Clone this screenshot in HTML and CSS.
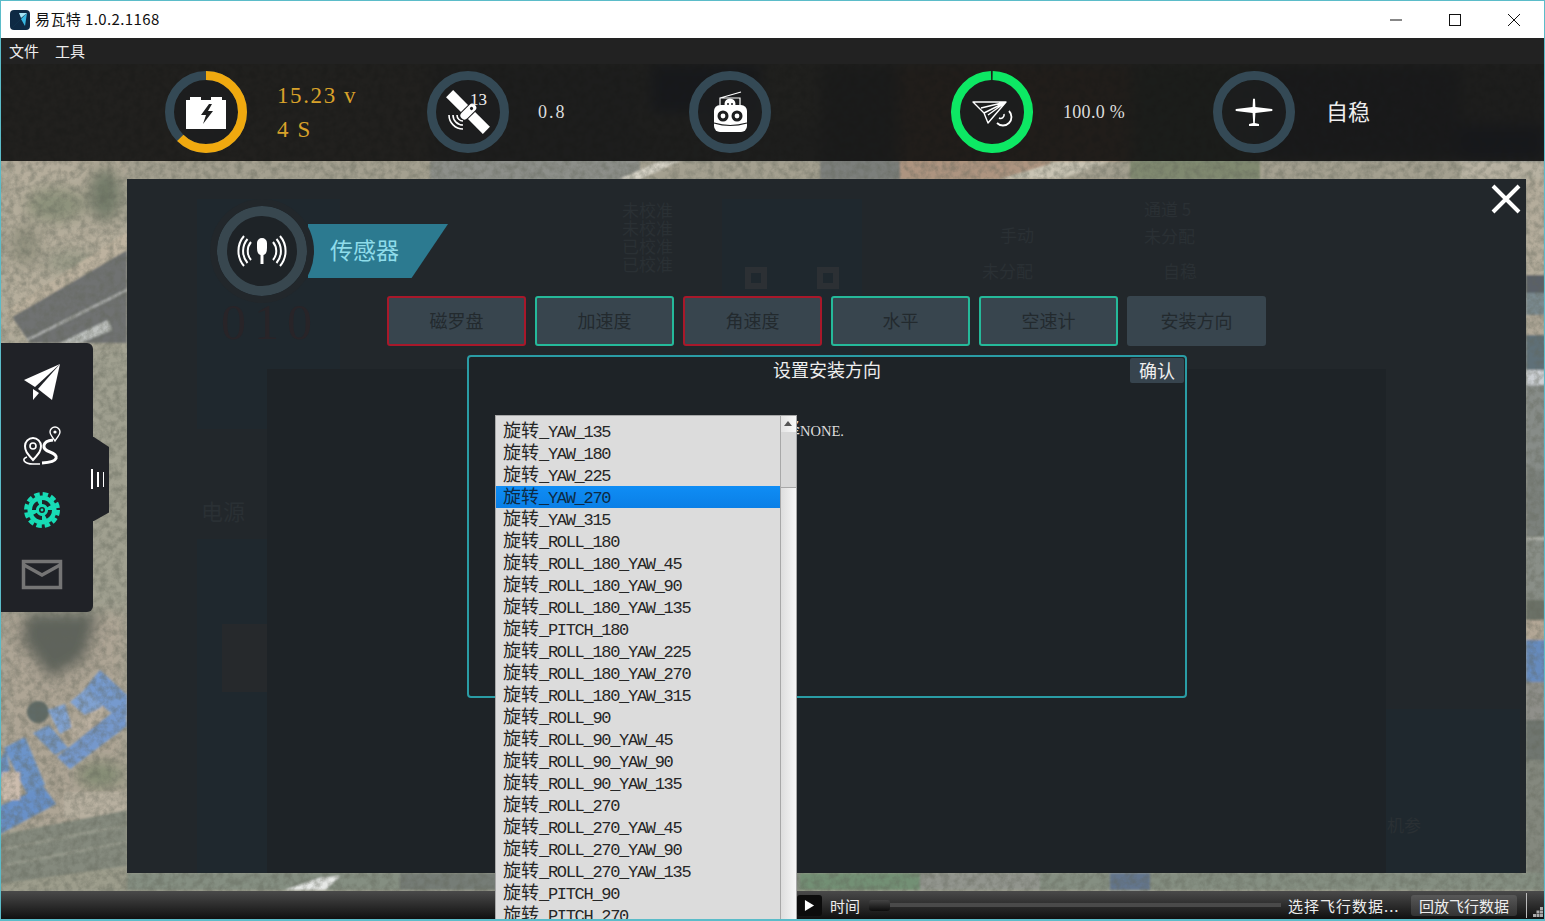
FILE: index.html
```html
<!DOCTYPE html>
<html lang="zh-CN">
<head>
    <meta charset="UTF-8">
    <meta name="viewport" content="width=device-width, initial-scale=1.0">
    <title>易瓦特 1.0.2.1168</title>
    <link rel="stylesheet" href="styles.css">
</head>
<body>
<div class="window">
    <header class="titlebar">
        <svg class="app-logo" viewBox="0 0 20 20">
            <rect width="20" height="20" rx="4" fill="#0e2a44"/>
            <path d="M3 17 L17 3 L15 16 L11 9 Z" fill="#38b8e2"/>
            <path d="M9 3 H17 L11 8 Z" fill="#a5e4f4"/>
        </svg>
        <span class="app-name">易瓦特 1.0.2.1168</span>
        <div class="win-controls">
            <svg viewBox="0 0 14 14"><path d="M1 7 H13" stroke="#111" fill="none"/></svg>
            <svg viewBox="0 0 14 14"><rect x="1.5" y="1.5" width="11" height="11" stroke="#111" fill="none"/></svg>
            <svg viewBox="0 0 14 14"><path d="M1 1 L13 13 M13 1 L1 13" stroke="#111" fill="none"/></svg>
        </div>
    </header>
    <nav class="menubar">
        <span>文件</span>
        <span>工具</span>
    </nav>

    <main class="stage">
        <!-- satellite map behind everything -->
        <svg class="map" viewBox="0 64 1545 857" width="1545" height="857">
            <defs>
                <filter id="soft"><feGaussianBlur stdDeviation="1.3"/></filter>
                <filter id="wide"><feGaussianBlur stdDeviation="7"/></filter>
                <filter id="blotch" x="0" y="0" width="100%" height="100%">
                    <feTurbulence type="fractalNoise" baseFrequency="0.14" numOctaves="4" seed="4"/>
                    <feColorMatrix values="0 0 0 0 0.12  0 0 0 0 0.13  0 0 0 0 0.1  2.4 0 0 0 -0.85"/>
                </filter>
            </defs>
            <rect x="0" y="64" width="1545" height="857" fill="#a0a090"/>
            <!-- big soft patches -->
            <g filter="url(#wide)">
                <rect x="0" y="64" width="430" height="115" fill="#a9a292"/>
                <rect x="430" y="64" width="210" height="115" fill="#8b8d88"/>
                <rect x="650" y="64" width="110" height="50" fill="#5a6680"/>
                <rect x="640" y="124" width="180" height="55" fill="#8f9088"/>
                <rect x="820" y="64" width="80" height="115" fill="#777a78"/>
                <rect x="900" y="64" width="230" height="115" fill="#a98d74"/>
                <rect x="1130" y="64" width="130" height="115" fill="#7f8a78"/>
                <rect x="1260" y="64" width="200" height="97" fill="#6b7078"/>
                <rect x="1460" y="64" width="85" height="60" fill="#8c8c86"/>
                <rect x="1460" y="124" width="85" height="37" fill="#57627e"/>
                <rect x="0" y="161" width="127" height="182" fill="#b6ae9c"/>
                <ellipse cx="55" cy="205" rx="30" ry="18" fill="#8d927c"/>
                <ellipse cx="105" cy="195" rx="18" ry="28" fill="#747d6a"/>
                <ellipse cx="25" cy="245" rx="16" ry="22" fill="#939280"/>
                <ellipse cx="70" cy="262" rx="26" ry="12" fill="#979986"/>
                <rect x="0" y="612" width="127" height="220" fill="#aea595"/>
                <path d="M25 613 L100 613 L85 660 L50 680 L20 640 Z" fill="#5e645c"/>
                <ellipse cx="100" cy="775" rx="24" ry="14" fill="#848c74"/>
            </g>
            <g filter="url(#soft)">
                <!-- top strip -->
                <rect x="127" y="161" width="1418" height="18" fill="#a4a090"/>
                <rect x="430" y="161" width="210" height="18" fill="#8d8f8a"/>
                <rect x="820" y="161" width="80" height="18" fill="#7c7f7c"/>
                <rect x="900" y="161" width="150" height="18" fill="#ad9480"/>
                <rect x="1130" y="161" width="130" height="18" fill="#80896f"/>
                <rect x="1460" y="161" width="85" height="18" fill="#b8b2a2"/>
                <path d="M620 179 L660 161 L680 161 L640 179 Z" fill="#d8d4c8"/>
                <path d="M1000 179 L1060 161 L1110 161 L1060 179 Z" fill="#c9c4b4"/>
                <!-- left strip, above the side menu -->
                <path d="M4 312 L127 232 L127 250 L10 322 Z" fill="#bdb29f"/>
                <path d="M12 317 L127 250 L127 343 L30 343 Z" fill="#6f7272"/>
                <path d="M27 340 L127 290" stroke="#b2b5b1" stroke-width="2"/>
                <path d="M60 343 L108 320 L112 330 L80 343 Z" fill="#bfc2c0"/>
                <!-- left strip, below the side menu -->
                <ellipse cx="38" cy="712" rx="11" ry="11" fill="#5e6a66"/>
                <path d="M84 690 L100 670 L127 695 L127 716 L110 712 Z" fill="#769ace"/>
                <path d="M70 702 L87 688 L102 706 L88 718 Z" fill="#80a2d2"/>
                <path d="M48 710 L65 704 L72 727 L60 734 Z" fill="#80a2d2"/>
                <path d="M57 757 L124 703 L127 726 L70 769 Z" fill="#7498cc"/>
                <path d="M33 733 L49 725 L68 748 L55 755 Z" fill="#7498c8"/>
                <path d="M70 722 L104 706 L100 722 L74 738 Z" fill="#bbb0a0"/>
                <path d="M4 748 L25 737 L45 785 L27 794 Z" fill="#6c94ca"/>
                <path d="M0 806 L43 786 L56 804 L0 834 Z" fill="#6890c8"/>
                <path d="M0 760 L6 750 L10 770 L0 778 Z" fill="#6c94ca"/>
                <rect x="2" y="772" width="18" height="28" fill="#cdbdae"/>
                <rect x="64" y="792" width="63" height="26" fill="#b8b0a0"/>
                <path d="M0 835 L127 810 L127 880 L0 890 Z" fill="#858a7e"/>
                <path d="M0 850 L127 825 M0 866 L127 842" stroke="#95998c" stroke-width="3"/>
                <path d="M0 884 L127 866 V890 H0 Z" fill="#9d9d8c"/>
                <!-- bottom strip -->
                <rect x="127" y="873" width="1418" height="17" fill="#858f82"/>
                <rect x="400" y="873" width="200" height="17" fill="#767d77"/>
                <rect x="800" y="873" width="120" height="17" fill="#739074"/>
                <rect x="920" y="873" width="120" height="17" fill="#92958e"/>
                <rect x="1110" y="873" width="40" height="17" fill="#64768e"/>
                <path d="M285 890 L320 878 L340 876 L325 890 Z" fill="#e6e8e6"/>
                <!-- right strip -->
                <rect x="1526" y="179" width="19" height="96" fill="#b5ad9c"/>
                <rect x="1526" y="275" width="19" height="18" fill="#5a6068"/>
                <rect x="1526" y="293" width="19" height="22" fill="#7a8a90"/>
                <rect x="1526" y="315" width="19" height="20" fill="#b0a898"/>
                <rect x="1526" y="335" width="19" height="35" fill="#5f6f78"/>
                <rect x="1526" y="370" width="19" height="15" fill="#ccd0d4"/>
                <rect x="1526" y="385" width="19" height="85" fill="#878c88"/>
                <rect x="1526" y="470" width="19" height="70" fill="#7c817c"/>
                <rect x="1526" y="537" width="19" height="4" fill="#aeb0a8"/>
                <rect x="1526" y="540" width="19" height="60" fill="#8a8f88"/>
                <rect x="1526" y="600" width="19" height="20" fill="#6c7268"/>
                <rect x="1526" y="620" width="19" height="20" fill="#b3a796"/>
                <rect x="1526" y="640" width="19" height="42" fill="#668bbe"/>
                <rect x="1526" y="682" width="19" height="38" fill="#8f8f8a"/>
                <rect x="1526" y="720" width="19" height="40" fill="#6f7670"/>
                <rect x="1526" y="760" width="19" height="113" fill="#84887e"/>
            </g>
            <rect x="0" y="64" width="1545" height="857" filter="url(#blotch)" opacity="0.4"/>
        </svg>

        <section class="status">
            <div class="status-item">
                <svg class="ring" viewBox="0 0 82 82">
                    <circle class="ring-inner" cx="41" cy="41" r="32"/>
                    <circle class="ring-track" cx="41" cy="41" r="36.5"/>
                    <circle class="ring-value ring-orange" cx="41" cy="41" r="36.5" stroke-dasharray="143 230" transform="rotate(-90 41 41)"/>
                    <path d="M21 29 H25 V26 H36 V29 H46 V26 H57 V29 H61 V58 H21 Z" fill="#fff"/>
                    <path d="M44 33 L36 44 H41 L38 53 L48 40 H43 L47 33 Z" fill="#1d1e1f"/>
                </svg>
                <div class="volt">
                    <span>15.23 v</span>
                    <span>4 S</span>
                </div>
            </div>
            <div class="status-item">
                <div class="ring-box">
                    <svg class="ring" viewBox="0 0 82 82">
                        <circle class="ring-inner" cx="41" cy="41" r="32"/>
                        <circle class="ring-track" cx="41" cy="41" r="36.5"/>
                        <g transform="rotate(45 41 41)" fill="#fff">
                            <rect x="15" y="36" width="21" height="10"/>
                            <rect x="46" y="36" width="21" height="10"/>
                        </g>
                        <g transform="rotate(-45 41 41)">
                            <rect x="32" y="37" width="19" height="8" rx="4" fill="#fff"/>
                            <circle cx="46" cy="41" r="1.6" fill="#1d1e1f"/>
                        </g>
                        <path d="M36 50 A6 6 0 0 1 30 44 M36 54 A10 10 0 0 1 26 44 M36 58 A14 14 0 0 1 22 44" stroke="#fff" stroke-width="1.6" fill="none"/>
                    </svg>
                    <span class="sat-count">13</span>
                </div>
                <span class="reading reading-sat">0.8</span>
            </div>
            <div class="status-item">
                <svg class="ring" viewBox="0 0 82 82">
                    <circle class="ring-inner" cx="41" cy="41" r="32"/>
                    <circle class="ring-track" cx="41" cy="41" r="36.5"/>
                    <path d="M31 27 L52 21 M31 34 V27 H51 V34" stroke="#fff" stroke-width="1.2" fill="none"/>
                    <rect x="25" y="34" width="33" height="27" rx="6" fill="#fff"/>
                    <circle cx="41" cy="33" r="5.5" fill="#fff"/>
                    <circle cx="39" cy="33" r="1" fill="#1d1e1f"/>
                    <circle cx="43" cy="33" r="1" fill="#1d1e1f"/>
                    <circle cx="34" cy="45" r="5.5" fill="#1d1e1f"/>
                    <circle cx="34" cy="45" r="2.4" fill="#fff"/>
                    <circle cx="48" cy="45" r="5.5" fill="#1d1e1f"/>
                    <circle cx="48" cy="45" r="2.4" fill="#fff"/>
                    <path d="M25 52 Q41 57 58 52" stroke="#1d1e1f" stroke-width="1.2" fill="none"/>
                </svg>
            </div>
            <div class="status-item">
                <svg class="ring" viewBox="0 0 82 82">
                    <circle class="ring-inner" cx="41" cy="41" r="32"/>
                    <circle class="ring-value ring-green" cx="41" cy="41" r="36.5" stroke-dasharray="227.3 2" transform="rotate(-89 41 41)"/>
                    <path d="M22 31 L55 31 L37 52 L33 42 Z M55 31 L33 42 M55 31 L30 37 M55 31 L37 44" stroke="#fff" stroke-width="1.4" stroke-linejoin="round" fill="none"/>
                    <path d="M58 40 A8 8 0 0 1 46 52" stroke="#fff" stroke-width="1.8" fill="none"/>
                    <path d="M53 43 A3.5 3.5 0 0 1 48 47" stroke="#fff" stroke-width="1.6" fill="none"/>
                </svg>
                <span class="reading">100.0 %</span>
            </div>
            <div class="status-item">
                <svg class="ring" viewBox="0 0 82 82">
                    <circle class="ring-inner" cx="41" cy="41" r="32"/>
                    <circle class="ring-track" cx="41" cy="41" r="36.5"/>
                    <path d="M40 28 Q41 27 42 28 L42.4 36 L59 38 Q60 39 59 40 L42.4 42 L41.8 52 L46 53 V55 H36 V53 L40.2 52 L39.6 42 L23 40 Q22 39 23 38 L39.6 36 Z" fill="#fff"/>
                </svg>
                <span class="mode">自稳</span>
            </div>
        </section>

        <aside class="sidenav">
            <svg viewBox="20 362 44 44">
                <path d="M60 365 L24 381 L35 388 Z" fill="#fff"/>
                <path d="M60 365 L38 390 L52 401 Z" fill="#fff"/>
                <path d="M33 390 L39 394 L33 401 Z" fill="#fff"/>
            </svg>
            <svg viewBox="20 425 44 44">
                <path d="M33 460 C27 453 25 451 25 446 A8 8 0 0 1 41 446 C41 451 39 453 33 460 Z" stroke="#fff" stroke-width="2" fill="none"/>
                <circle cx="33" cy="446" r="3" stroke="#fff" stroke-width="1.6" fill="none"/>
                <path d="M27 457 C21 459 24 464 33 464 H40" stroke="#fff" stroke-width="1.6" fill="none"/>
                <path d="M53 440 C42 441 41 449 50 452 C59 455 60 462 42 463" stroke="#fff" stroke-width="3" fill="none"/>
                <path d="M55 441 C52 436 50 435 50 432 A5 5 0 0 1 60 432 C60 435 58 436 55 441 Z" stroke="#fff" stroke-width="1.4" fill="none"/>
                <circle cx="55" cy="432" r="1.6" fill="#fff"/>
            </svg>
            <svg viewBox="20 488 44 44">
                <circle cx="42" cy="510" r="16" stroke="#17dbb5" stroke-width="4" stroke-dasharray="5.4 3" fill="none"/>
                <circle cx="42" cy="510" r="14.5" fill="#17dbb5"/>
                <circle cx="42" cy="510" r="8" stroke="#1f2126" stroke-width="4" stroke-dasharray="8.5 4" fill="none"/>
                <circle cx="42" cy="510" r="3" fill="#1f2126"/>
                <circle cx="42" cy="510" r="1.4" fill="#17dbb5"/>
            </svg>
            <svg viewBox="20 551 44 44">
                <rect x="23.5" y="560.5" width="37" height="26" stroke="#757575" stroke-width="3.5" fill="none"/>
                <path d="M24 564 L42 574 L60 564" stroke="#757575" stroke-width="3.5" fill="none"/>
            </svg>
        </aside>
        <div class="sidenav-tab"><i></i><i></i><i></i></div>

        <section class="panel">
            <!-- page behind the panel, barely visible through it -->
            <div class="ghost ghost-a"></div>
            <div class="ghost ghost-b"></div>
            <div class="ghost ghost-c"></div>
            <div class="ghost ghost-d"></div>
            <div class="ghost-box gb-1"></div>
            <div class="ghost-box gb-2"></div>
            <div class="ghost-box gb-3"></div>
            <div class="ghost-text gt-1">未校准<br>未校准<br>已校准<br>已校准</div>
            <div class="ghost-text gt-2">手动</div>
            <div class="ghost-text gt-3">未分配</div>
            <div class="ghost-text gt-4">通道 5</div>
            <div class="ghost-text gt-5">未分配</div>
            <div class="ghost-text gt-6">自稳</div>
            <div class="ghost-text gt-7">电源</div>
            <div class="ghost-text gt-8">010</div>
            <div class="panel-inner"></div>
            <div class="ghost-text gt-9">机参</div>

            <div class="panel-head">
                <svg class="sensor-ring" viewBox="0 0 90 90">
                    <circle cx="45" cy="45" r="40" fill="#1e2327" stroke="#38474f" stroke-width="10"/>
                    <path d="M40 37 A5 5 0 0 1 50 37 V42 Q50 48 46.5 49 V58 H43.5 V49 Q40 48 40 42 Z" fill="#fff"/>
                    <g stroke="#fff" stroke-width="2" fill="none">
                        <path d="M34 36 A14 14 0 0 0 34 54 M30.500 33 A18.500 18.500 0 0 0 30.500 57 M27 30 A23 23 0 0 0 27 60"/>
                        <path d="M56 36 A14 14 0 0 1 56 54 M59.500 33 A18.500 18.500 0 0 1 59.500 57 M63 30 A23 23 0 0 1 63 60"/>
                    </g>
                </svg>
                <h2 class="panel-tag">传感器</h2>
            </div>

            <div class="tabs">
                <button class="tab tab-bad">磁罗盘</button>
                <button class="tab tab-ok">加速度</button>
                <button class="tab tab-bad">角速度</button>
                <button class="tab tab-ok">水平</button>
                <button class="tab tab-ok">空速计</button>
                <button class="tab">安装方向</button>
            </div>

            <div class="dialog">
                <h3 class="dialog-title">设置安装方向</h3>
                <button class="dialog-ok">确认</button>
                <p class="dialog-msg"><span class="zh">请选择</span>NONE.</p>
            </div>

            <button class="panel-close">
                <svg viewBox="0 0 30 30"><path d="M2 2 L28 28 M28 2 L2 28" stroke="#fff" stroke-width="4" fill="none"/></svg>
            </button>
        </section>

        <div class="dropdown">
            <ul class="dropdown-list">
                <li><span class="zh">旋转</span>_YAW_135</li>
                <li><span class="zh">旋转</span>_YAW_180</li>
                <li><span class="zh">旋转</span>_YAW_225</li>
                <li class="selected"><span class="zh">旋转</span>_YAW_270</li>
                <li><span class="zh">旋转</span>_YAW_315</li>
                <li><span class="zh">旋转</span>_ROLL_180</li>
                <li><span class="zh">旋转</span>_ROLL_180_YAW_45</li>
                <li><span class="zh">旋转</span>_ROLL_180_YAW_90</li>
                <li><span class="zh">旋转</span>_ROLL_180_YAW_135</li>
                <li><span class="zh">旋转</span>_PITCH_180</li>
                <li><span class="zh">旋转</span>_ROLL_180_YAW_225</li>
                <li><span class="zh">旋转</span>_ROLL_180_YAW_270</li>
                <li><span class="zh">旋转</span>_ROLL_180_YAW_315</li>
                <li><span class="zh">旋转</span>_ROLL_90</li>
                <li><span class="zh">旋转</span>_ROLL_90_YAW_45</li>
                <li><span class="zh">旋转</span>_ROLL_90_YAW_90</li>
                <li><span class="zh">旋转</span>_ROLL_90_YAW_135</li>
                <li><span class="zh">旋转</span>_ROLL_270</li>
                <li><span class="zh">旋转</span>_ROLL_270_YAW_45</li>
                <li><span class="zh">旋转</span>_ROLL_270_YAW_90</li>
                <li><span class="zh">旋转</span>_ROLL_270_YAW_135</li>
                <li><span class="zh">旋转</span>_PITCH_90</li>
                <li><span class="zh">旋转</span>_PITCH_270</li>
            </ul>
            <div class="scrollbar">
                <div class="scroll-up"></div>
                <div class="scroll-track"></div>
                <div class="scroll-thumb"></div>
            </div>
        </div>

        <footer class="playbar">
            <button class="play-btn"><svg viewBox="0 0 12 14"><path d="M1 1 L11 7 L1 13 Z" fill="#fff"/></svg></button>
            <span class="play-label">时间</span>
            <div class="slider"><div class="slider-knob"></div></div>
            <span class="play-file">选择飞行数据...</span>
            <button class="play-replay">回放飞行数据</button>
            <div class="play-sep"></div>
            <svg class="grip" viewBox="0 0 10 10">
                <path d="M7 0h3v3H7zM3.500 3.500h3v3h-3zM7 3.500h3v3H7zM0 7h3v3H0zM3.500 7h3v3h-3zM7 7h3v3H7z" fill="#aaa"/>
            </svg>
        </footer>
    </main>
</div>
</body>
</html>
```

FILE: styles.css
```css
* {
    box-sizing: border-box;
}
body {
    margin: 0;
    background-color: #222;
    font-family: "Noto Sans CJK SC", sans-serif;
}
button {
    font-family: inherit;
    padding: 0;
}
.window {
    width: 1545px;
    height: 921px;
    display: flex;
    flex-direction: column;
    border: 1px solid #5bbcc9;
    border-bottom-width: 2px;
    overflow: hidden;
}

/* title bar */
.titlebar {
    height: 37px;
    flex: none;
    background-color: #fff;
    display: flex;
    align-items: center;
    padding-left: 9px;
}
.app-logo {
    width: 20px;
    height: 20px;
    margin-right: 5px;
}
.app-name {
    font-size: 15px;
    line-height: 20px;
    letter-spacing: 0.4px;
    margin-top: -2px;
    color: #111;
}
.win-controls {
    margin-left: auto;
    display: flex;
    gap: 45px;
    padding-right: 23px;
}
.win-controls svg {
    width: 14px;
    height: 14px;
}

/* menu */
.menubar {
    height: 26px;
    flex: none;
    padding: 0 0 2px 8px;
    background-color: #222;
    color: #eee;
    font-size: 15px;
    display: flex;
    align-items: center;
    gap: 16px;
}

/* stage */
.stage {
    flex: 1;
    position: relative;
    display: flex;
    flex-direction: column;
    overflow: hidden;
}
.map {
    position: absolute;
    left: -1px;
    top: 0;
}

/* status row */
.status {
    height: 97px;
    flex: none;
    position: relative;
    display: flex;
    align-items: center;
    padding: 0 0 2px 164px;
    background-color: rgba(14, 14, 14, 0.88);
}
.status-item {
    width: 262px;
    display: flex;
    align-items: center;
    gap: 30px;
}
.ring {
    width: 82px;
    height: 82px;
    display: block;
    flex: none;
}
.ring-box {
    position: relative;
    flex: none;
}
.ring-inner {
    fill: rgba(28, 29, 30, 0.85);
}
.ring-track {
    fill: none;
    stroke: #344955;
    stroke-width: 9;
}
.ring-value {
    fill: none;
    stroke-width: 9;
}
.ring-orange {
    stroke: #f0a90f;
}
.ring-green {
    stroke: #0de864;
}
.sat-count {
    position: absolute;
    left: 43px;
    top: 19px;
    font: 17px "Liberation Serif", serif;
    color: #eee;
}
.volt {
    display: flex;
    flex-direction: column;
    gap: 7px;
    padding-top: 1px;
    font: 23px/27px "Liberation Serif", serif;
    color: #d9a22a;
    letter-spacing: 1.6px;
}
.reading {
    padding-top: 1px;
    font: 18px "Liberation Serif", serif;
    color: #ddd;
    letter-spacing: 0.3px;
}
.reading-sat {
    margin-left: -1px;
    letter-spacing: 2px;
}
.mode {
    margin: -3px 0 0 1px;
    font-size: 22px;
    color: #eee;
}

/* side menu */
.sidenav {
    position: absolute;
    left: 0;
    top: 279px;
    width: 92px;
    height: 269px;
    padding: 18px 10px 0 0;
    background-color: #202227;
    border-radius: 0 6px 6px 0;
    display: flex;
    flex-direction: column;
    align-items: center;
}
.sidenav svg {
    width: 44px;
    height: 44px;
    margin-bottom: 19.5px;
    flex: none;
}
.sidenav-tab {
    position: absolute;
    left: 90px;
    top: 373px;
    width: 18px;
    height: 84px;
    background-color: #202227;
    clip-path: polygon(0 0, 16% 0, 100% 12%, 100% 90%, 16% 100%, 0 100%);
    display: flex;
    align-items: center;
    gap: 4px;
}
.sidenav-tab i {
    display: block;
    background-color: #fff;
    width: 2px;
    height: 20px;
}
.sidenav-tab i:nth-child(2) {
    height: 15px;
    width: 1.5px;
}
.sidenav-tab i:nth-child(3) {
    height: 15px;
    width: 1px;
}

/* sensor panel */
.panel {
    position: absolute;
    left: 126px;
    top: 115px;
    width: 1399px;
    height: 694px;
    padding: 27px 0 0 90px;
    background-color: #22272b;
}
.ghost {
    position: absolute;
    background-color: #1f282e;
}
.ghost-a {
    left: 70px;
    top: 20px;
    width: 143px;
    height: 230px;
}
.ghost-b {
    left: 595px;
    top: 20px;
    width: 140px;
    height: 160px;
}
.ghost-c {
    left: 70px;
    top: 360px;
    width: 143px;
    height: 334px;
}
.ghost-d {
    left: 1259px;
    top: 530px;
    width: 134px;
    height: 164px;
}
.ghost-box {
    position: absolute;
    background-color: #26292c;
}
.gb-1 {
    left: 618px;
    top: 88px;
    width: 22px;
    height: 22px;
    border: 6px solid #2c3034;
    background-color: #1f282e;
}
.gb-2 {
    left: 690px;
    top: 88px;
    width: 22px;
    height: 22px;
    border: 6px solid #2c3034;
    background-color: #1f282e;
}
.gb-3 {
    left: 95px;
    top: 445px;
    width: 45px;
    height: 68px;
}
.ghost-text {
    position: absolute;
    font-size: 17px;
    line-height: 18px;
    color: #2a3034;
}
.gt-1 {
    left: 495px;
    top: 22px;
}
.gt-2 {
    left: 873px;
    top: 47px;
}
.gt-3 {
    left: 855px;
    top: 83px;
}
.gt-4 {
    left: 1017px;
    top: 21px;
}
.gt-5 {
    left: 1017px;
    top: 48px;
}
.gt-6 {
    left: 1036px;
    top: 83px;
}
.gt-7 {
    left: 74px;
    top: 322px;
    font-size: 22px;
}
.gt-8 {
    left: 94px;
    top: 118px;
    font: 50px/50px "Liberation Serif", serif;
    letter-spacing: 8px;
    color: #282428;
}
.gt-9 {
    left: 1260px;
    top: 637px;
}
.panel-inner {
    position: absolute;
    left: 140px;
    top: 190px;
    width: 1119px;
    bottom: 0;
    background-color: #1e2327;
}
.panel-head {
    position: relative;
    display: flex;
    align-items: center;
    height: 90px;
}
.sensor-ring {
    width: 90px;
    height: 90px;
    flex: none;
    position: relative;
    z-index: 1;
    border-radius: 50%;
    box-shadow: 0 0 0 7px #22272b;
}
.panel-tag {
    margin: 0 0 0 1px;
    width: 140px;
    height: 54px;
    padding-left: 22px;
    background-color: #2c7a90;
    clip-path: polygon(0 0, 100% 0, 74% 100%, 0 100%);
    color: #8fdcea;
    font-size: 23px;
    font-weight: 400;
    line-height: 50px;
}
.tabs {
    position: relative;
    display: flex;
    gap: 9px;
    margin-left: 170px;
}
.tab {
    width: 139px;
    height: 50px;
    padding-bottom: 3px;
    background-color: #38454e;
    border: 2px solid #38454e;
    border-radius: 3px;
    color: #232a2e;
    font-size: 18px;
}
.tab-bad {
    border-color: #a8182a;
}
.tab-ok {
    border-color: #25b99a;
}
.dialog {
    position: absolute;
    left: 340px;
    top: 176px;
    width: 720px;
    height: 343px;
    background-color: #1e2327;
    border: 2px solid #2a9ca5;
    border-radius: 4px;
    color: #eee;
}
.dialog-title {
    margin: 0;
    font-size: 18px;
    font-weight: 400;
    line-height: 24px;
    text-align: center;
}
.dialog-ok {
    position: absolute;
    top: 1px;
    right: 1px;
    width: 54px;
    height: 25px;
    background-color: #37444e;
    border: none;
    border-radius: 2px;
    color: #eee;
    font-size: 18px;
    line-height: 23px;
}
.dialog-msg {
    margin: 36px 0 0 277px;
    font: 14.5px/22px "Liberation Serif", serif;
    color: #ddd;
}
.zh {
    font-family: "Noto Sans CJK SC", sans-serif;
    font-size: 18px;
    letter-spacing: 0;
}
.panel-close {
    position: absolute;
    right: 5px;
    top: 5px;
    width: 30px;
    height: 30px;
    background: none;
    border: none;
}
.panel-close svg {
    display: block;
}

/* dropdown that drops over the bottom bar */
.dropdown {
    position: absolute;
    z-index: 3;
    left: 494px;
    top: 351px;
    width: 302px;
    height: 520px;
    display: flex;
    background-color: #dcdcdc;
    border: 1px solid #a8a8a8;
}
.dropdown-list {
    list-style: none;
    margin: 0;
    padding: 4px 0 0;
    width: 284px;
    flex: none;
}
.dropdown-list li {
    height: 22px;
    padding-left: 7px;
    font: 17px/18px "Liberation Mono", monospace;
    letter-spacing: -1.3px;
    color: #262626;
    white-space: nowrap;
}
.dropdown-list .zh {
    line-height: 18px;
}
.dropdown-list .selected {
    background: linear-gradient(#0f8df5, #0a7fe6);
    color: #0d2a44;
}
.scrollbar {
    flex: 1;
    display: flex;
    flex-direction: column;
    border-left: 1px solid #a8a8a8;
}
.scroll-up {
    height: 16px;
    flex: none;
    background: linear-gradient(90deg, #e4e4e4, #f8f8f8);
    position: relative;
}
.scroll-up::after {
    content: "";
    position: absolute;
    left: 3px;
    top: 5px;
    border: 4px solid transparent;
    border-top: 0;
    border-bottom: 5px solid #555;
}
.scroll-track {
    height: 55px;
    flex: none;
    background-color: #d8d8d8;
}
.scroll-thumb {
    flex: 1;
    border-top: 1px solid #a8a8a8;
    background: linear-gradient(90deg, #dedede, #f6f6f6);
}

/* bottom bar */
.playbar {
    position: relative;
    margin-top: auto;
    height: 28px;
    flex: none;
    display: flex;
    align-items: center;
    background: linear-gradient(#4a4a4a, #101010);
    color: #eee;
    font-size: 15px;
    padding-left: 796px;
}
.play-btn {
    width: 25px;
    height: 21px;
    flex: none;
    background-color: #0c0c0c;
    border: none;
    border-radius: 3px;
    display: flex;
    align-items: center;
    justify-content: center;
}
.play-btn svg {
    width: 11px;
    height: 13px;
}
.play-label {
    margin-left: 8px;
    width: 31px;
}
.slider {
    width: 412px;
    height: 4px;
    flex: none;
    margin-left: 8px;
    background-color: #4a4a4a;
    display: flex;
    align-items: center;
}
.slider-knob {
    width: 21px;
    height: 11px;
    background: linear-gradient(#444, #0c0c0c);
    border-radius: 3px;
}
.play-file {
    margin-left: 7px;
    width: 123px;
    letter-spacing: 1px;
    white-space: nowrap;
}
.play-replay {
    width: 106px;
    height: 21px;
    flex: none;
    background: linear-gradient(#585858, #333);
    border: none;
    border-radius: 3px;
    color: #eee;
    font-size: 15px;
    line-height: 21px;
}
.play-sep {
    width: 1px;
    height: 25px;
    margin-left: 9px;
    background-color: #bbb;
}
.grip {
    width: 10px;
    height: 10px;
    flex: none;
    margin: 14px 0 0 6px;
}
```
